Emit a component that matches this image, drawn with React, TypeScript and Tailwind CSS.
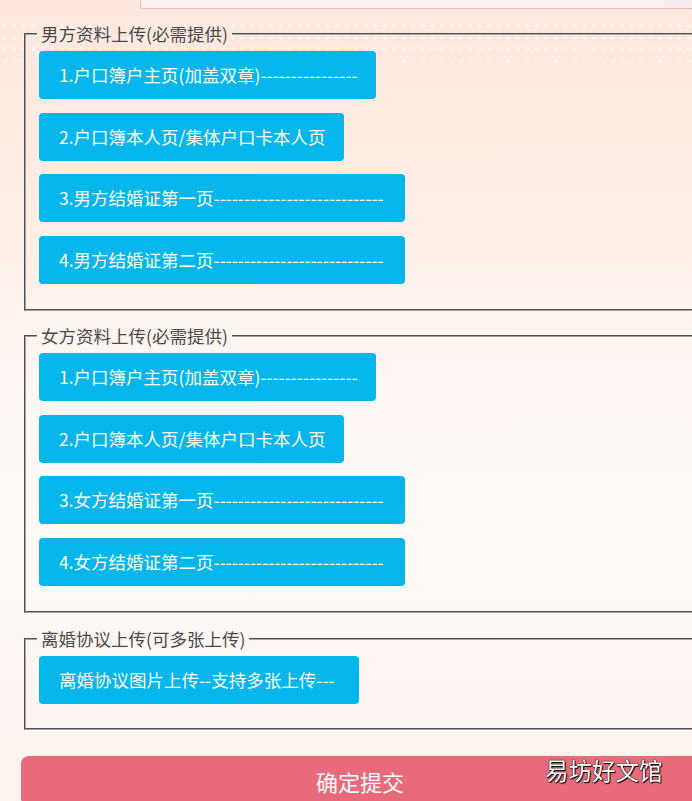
import React from "react"

const FONT = "font-['Microsoft_YaHei','Noto_Sans_CJK_SC','Noto_Sans',sans-serif]"

type Item = { label: string; width: string }

function UploadButton({ label, width }: Item) {
  return (
    <button
      type="button"
      className={`${width} h-12 rounded-[4px] bg-[#04b6ec] pl-5 text-left text-[17.5px] leading-[48px] text-white whitespace-nowrap overflow-hidden`}
    >
      {label}
    </button>
  )
}

function Group({
  title,
  items,
  className = "",
  pb = "pb-[24px]",
}: {
  title: string
  items: Item[]
  className?: string
  pb?: string
}) {
  return (
    <fieldset
      className={`ml-6 w-[690px] border-2 [border-style:groove] border-[#a4a4a4] pl-[13px] pr-0 pt-[5px] ${pb} ${className}`}
    >
      <legend className="ml-[-2px] px-[4px] text-[17.5px] leading-[24px] text-[#4a4a4a]">{title}</legend>
      <div className="flex flex-col items-start gap-[13.7px]">
        {items.map((it, i) => (
          <UploadButton key={i} {...it} />
        ))}
      </div>
    </fieldset>
  )
}

const male: Item[] = [
  { label: "1.户口簿户主页(加盖双章)----------------", width: "w-[337px]" },
  { label: "2.户口簿本人页/集体户口卡本人页", width: "w-[305px]" },
  { label: "3.男方结婚证第一页----------------------------", width: "w-[366px]" },
  { label: "4.男方结婚证第二页----------------------------", width: "w-[366px]" },
]

const female: Item[] = [
  { label: "1.户口簿户主页(加盖双章)----------------", width: "w-[337px]" },
  { label: "2.户口簿本人页/集体户口卡本人页", width: "w-[305px]" },
  { label: "3.女方结婚证第一页----------------------------", width: "w-[366px]" },
  { label: "4.女方结婚证第二页----------------------------", width: "w-[366px]" },
]

export default function App() {
  return (
    <div
      className={`relative w-[692px] h-[801px] overflow-hidden ${FONT} [background-image:radial-gradient(circle,rgba(255,255,255,0.75)_1.3px,transparent_2px),radial-gradient(circle,rgba(255,255,255,0.75)_1.3px,transparent_2px),radial-gradient(circle,rgba(255,255,255,0.6)_1.3px,transparent_2px),radial-gradient(circle,rgba(255,255,255,0.4)_1.3px,transparent_2px),linear-gradient(180deg,#fde7dc_0%,#fdeee6_30%,#fff8f5_48%,#fffaf8_70%,#fdf3ee_100%)] [background-size:9.5px_11.5px,9.5px_11.5px,9.5px_11.5px,9.5px_11.5px,100%_100%] [background-repeat:repeat-x,repeat-x,repeat-x,repeat-x,no-repeat] [background-position:0_20px,0_32px,0_43px,0_55px,0_0]`}
    >
      {/* top input box, cut off */}
      <div className="ml-[140px] flex h-[9px] w-[560px] rounded-bl-[3px] border-b border-l border-[#e8b7b7] bg-[#fdf1ef]">
        <div className="ml-auto mr-[8px] h-full w-[28px] bg-[#f6e8ec]" />
      </div>

      <Group title="男方资料上传(必需提供)" items={male} className="mt-[13px]" pb="pb-[25px]" />
      <Group title="女方资料上传(必需提供)" items={female} className="mt-[13px]" pb="pb-[25px]" />
      <Group
        title="离婚协议上传(可多张上传)"
        items={[{ label: "离婚协议图片上传--支持多张上传---", width: "w-[320px]" }]}
        className="mt-[14px]"
        pb="pb-[24px]"
      />

      <button
        type="button"
        className="ml-[21px] mt-[26px] h-[50px] w-[678px] rounded-lg bg-[#e96a7a] text-[22px] leading-[50px] text-white"
      >
        确定提交
      </button>

      <span className="absolute left-[545px] top-[753px] text-[23.5px] text-white [text-shadow:0_0_1px_#000,0_0_1px_#000,1px_1px_1px_#000]">
        易坊好文馆
      </span>
    </div>
  )
}
